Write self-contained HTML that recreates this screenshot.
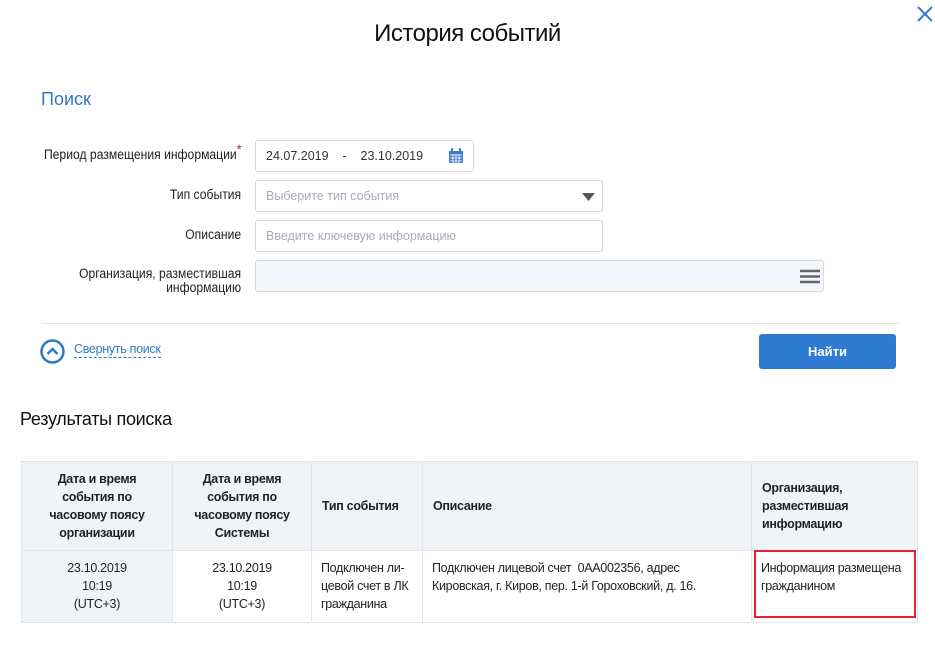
<!DOCTYPE html>
<html><head><meta charset="utf-8"><style>
*{box-sizing:border-box;margin:0;padding:0}
body{width:935px;height:665px;background:#fff;font-family:"Liberation Sans",sans-serif;color:#222;position:relative;overflow:hidden;font-size:13px}
.a{position:absolute}
.lbl{position:absolute;right:694px;text-align:right;font-size:13.5px;color:#222;transform:scaleX(0.9);transform-origin:right top}
.inp{position:absolute;border:1px solid #d6dbe1;border-radius:3px;background:#fff;font-size:12.5px;color:#aab;padding-left:10px;display:flex;align-items:center}
table{position:absolute;left:21px;top:461px;width:897px;border-collapse:collapse;font-size:12.5px;letter-spacing:-0.3px}
td{border:1px solid #e3e7ec;vertical-align:middle;line-height:18px}
thead td{background:#f1f4f7;height:89px;font-weight:bold;color:#222;padding:0 10px}
tbody td{height:72px;vertical-align:top;padding:8px 9px 0}
</style></head><body>
<div class="a" style="left:0;width:935px;top:20px;text-align:center;font-size:24px;color:#111;letter-spacing:-0.5px">История событий</div>
<svg class="a" style="left:916px;top:5px" width="18" height="18"><path d="M2 2L16 16M16 2L2 16" stroke="#3a7bc8" stroke-width="2"/></svg>
<div class="a" style="left:41px;top:89px;font-size:18px;color:#2f78c5">Поиск</div>
<div class="lbl" style="top:147px">Период размещения информации<span style="color:#c22;position:relative;top:-5px">*</span></div>
<div class="inp" style="left:255px;top:140px;width:219px;height:32px;color:#333">24.07.2019&nbsp;&nbsp;&nbsp;&nbsp;-&nbsp;&nbsp;&nbsp;&nbsp;23.10.2019
<svg class="a" style="left:192px;top:7px" width="16" height="16"><rect x="1" y="3" width="14" height="12" fill="#3b7ccb"/><rect x="3" y="0" width="2" height="4" fill="#3b7ccb"/><rect x="11" y="0" width="2" height="4" fill="#3b7ccb"/><path d="M2 7H14M2 10H14M2 13H14M5 6V15M8 6V15M11 6V15" stroke="#fff" stroke-width=".8"/></svg></div>
<div class="lbl" style="top:187px">Тип события</div>
<div class="inp" style="left:255px;top:180px;width:348px;height:32px">Выберите тип события
<svg class="a" style="left:326px;top:12px" width="13" height="8"><path d="M0 0H13L6.5 8Z" fill="#555"/></svg></div>
<div class="lbl" style="top:227px">Описание</div>
<div class="inp" style="left:255px;top:220px;width:348px;height:32px">Введите ключевую информацию</div>
<div class="lbl" style="top:267px;line-height:14px">Организация, разместившая<br>информацию</div>
<div class="inp" style="left:255px;top:260px;width:569px;height:32px;background:#f3f6fa">
<svg class="a" style="left:544px;top:8px" width="20" height="15"><path d="M0 2H20M0 7.5H20M0 13H20" stroke="#666" stroke-width="2.5"/></svg></div>
<div class="a" style="left:41px;top:323px;width:858px;height:1px;background:#e0e3e7"></div>
<svg class="a" style="left:40px;top:339px" width="25" height="25"><circle cx="12.5" cy="12.5" r="11" fill="none" stroke="#2f78c5" stroke-width="2.5"/><path d="M7.5 15L12.5 10L17.5 15" fill="none" stroke="#2f78c5" stroke-width="2.5"/></svg>
<div class="a" style="left:74px;top:342px;font-size:12.5px;color:#2f78c5;border-bottom:1px dashed #2f78c5;line-height:15px;letter-spacing:-0.3px">Свернуть поиск</div>
<div class="a" style="left:759px;top:334px;width:137px;height:35px;background:#2f7bd1;border-radius:3px;color:#fff;font-weight:bold;font-size:13px;text-align:center;line-height:35px">Найти</div>
<div class="a" style="left:20px;top:409px;font-size:18px;color:#111;letter-spacing:-0.3px">Результаты поиска</div>
<table>
<thead><tr>
<td style="width:151px;text-align:center">Дата и время события по часовому поясу организации</td>
<td style="width:139px;text-align:center">Дата и время события по часовому поясу Системы</td>
<td style="width:111px">Тип события</td>
<td style="width:329px">Описание</td>
<td>Организация, разместившая информацию</td>
</tr></thead>
<tbody><tr>
<td style="text-align:center;background:#f1f4f7">23.10.2019<br>10:19<br>(UTC+3)</td>
<td style="text-align:center">23.10.2019<br>10:19<br>(UTC+3)</td>
<td>Подключен ли-цевой счет в ЛК гражданина</td>
<td>Подключен лицевой счет &nbsp;0АА002356, адрес Кировская, г. Киров, пер. 1-й Гороховский, д. 16.</td>
<td style="position:relative">Информация размещена гражданином<div class="a" style="left:2px;top:-1px;right:1px;height:68px;border:2px solid #e8212f"></div></td>
</tr></tbody>
</table>
</body></html>
